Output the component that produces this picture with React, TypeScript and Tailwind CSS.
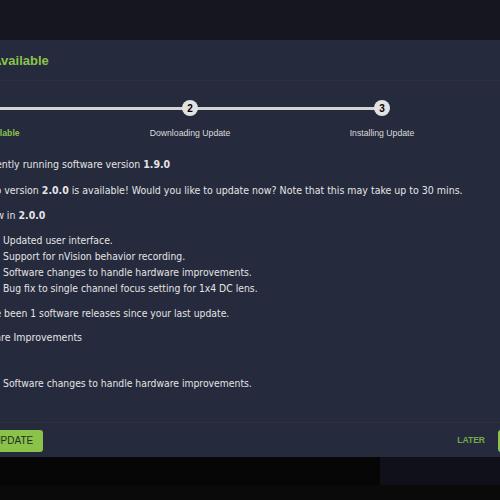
import React from 'react'

const body = { fontFamily: '"DejaVu Sans Condensed", "DejaVu Sans", sans-serif' }
const ui = { fontFamily: '"Liberation Sans", Arial, sans-serif' }

function Step({ n, label, active }: { n: number; label: string; active?: boolean }) {
  return (
    <div className="w-[192px] flex flex-col items-center">
      <div className="w-[16px] h-[16px] rounded-full bg-[#e2e2e2] flex items-center justify-center text-[10px] font-bold text-black" style={ui}>
        {n}
      </div>
      <div
        className={`mt-[11px] leading-[12px] text-[8.7px] whitespace-nowrap ${active ? 'font-bold text-[#8bc34a]' : 'text-[#dcdcdc]'}`}
        style={ui}
      >
        {label}
      </div>
    </div>
  )
}

export default function App() {
  const bullets = [
    'Updated user interface.',
    'Support for nVision behavior recording.',
    'Software changes to handle hardware improvements.',
    'Bug fix to single channel focus setting for 1x4 DC lens.',
  ]

  return (
    <div className="w-[500px] h-[500px] overflow-hidden bg-[#070707] flex flex-col">
      <div className="h-[40px] shrink-0 bg-[#15161f]" />

      {/* dialog, wider than the window */}
      <div className="shrink-0 w-[680px] ml-[-80px] h-[417px] bg-[#252a3d] flex flex-col">
        <div className="h-[41px] shrink-0 border-b border-[#302f39] flex items-center pl-[25px] pt-[2px]">
          <span className="text-[13px] font-bold text-[#8bc34a]" style={ui}>
            Update Available
          </span>
        </div>

        <div className="h-[341px] shrink-0 pl-[27px] pt-[19px]">
          {/* stepper */}
          <div className="relative ml-[-58px] flex">
            <div className="absolute left-0 w-[495px] top-[6.5px] h-[3px] bg-[#d4d4d4]" />
            <div className="relative flex">
              <Step n={1} label="Update Available" active />
              <div className="w-[13px]" />
              <Step n={2} label="Downloading Update" />
              <Step n={3} label="Installing Update" />
            </div>
          </div>

          <div className="mt-[17px] ml-[-7px] text-[10.5px] leading-[16px] text-[#e4e4e4]" style={body}>
            <p>You are currently running software version <b>1.9.0</b></p>
            <p className="mt-[10px]">
              An update to version <b>2.0.0</b> is available! Would you like to update now? Note that this may take up to 30 mins.
            </p>
            <p className="mt-[9px] pl-[9px]">What's new in <b>2.0.0</b></p>
            <ul className="mt-[9px] pl-[63px] list-disc text-[10.3px]">
              {bullets.map((b) => (
                <li key={b}>{b}</li>
              ))}
            </ul>
            <p className="mt-[9px] pl-[9px] text-[10.3px]">There have been 1 software releases since your last update.</p>
            <p className="mt-[8px] pl-[25px]">Hardware Improvements</p>
            <ul className="mt-[30px] pl-[63px] list-disc text-[10.3px]">
              <li>Software changes to handle hardware improvements.</li>
            </ul>
          </div>
        </div>

        <div className="h-[35px] shrink-0 border-t border-[#302f39] flex items-center justify-between pl-[38px] pt-[1px]">
          <button className="h-[22px] px-[10px] rounded-[3px] bg-[#8bc34a] text-[10px] text-[#22301a] font-medium" style={ui}>
            SKIP UPDATE
          </button>
          <div className="flex items-center gap-[13px] pr-[15px]">
            <button className="text-[8.5px] text-[#74ab48] font-semibold" style={ui}>
              LATER
            </button>
            <button className="h-[22px] px-[10px] rounded-[3px] bg-[#8bc34a] text-[10px] text-[#22301a] font-medium" style={ui}>
              UPDATE NOW
            </button>
          </div>
        </div>
      </div>

      <div className="flex h-[28px] shrink-0">
        <div className="w-[380px] bg-[#060606]" />
        <div className="flex-1 bg-[#0f1019]" />
      </div>
      <div className="flex-1 bg-[#0a0a0a]" />
    </div>
  )
}
